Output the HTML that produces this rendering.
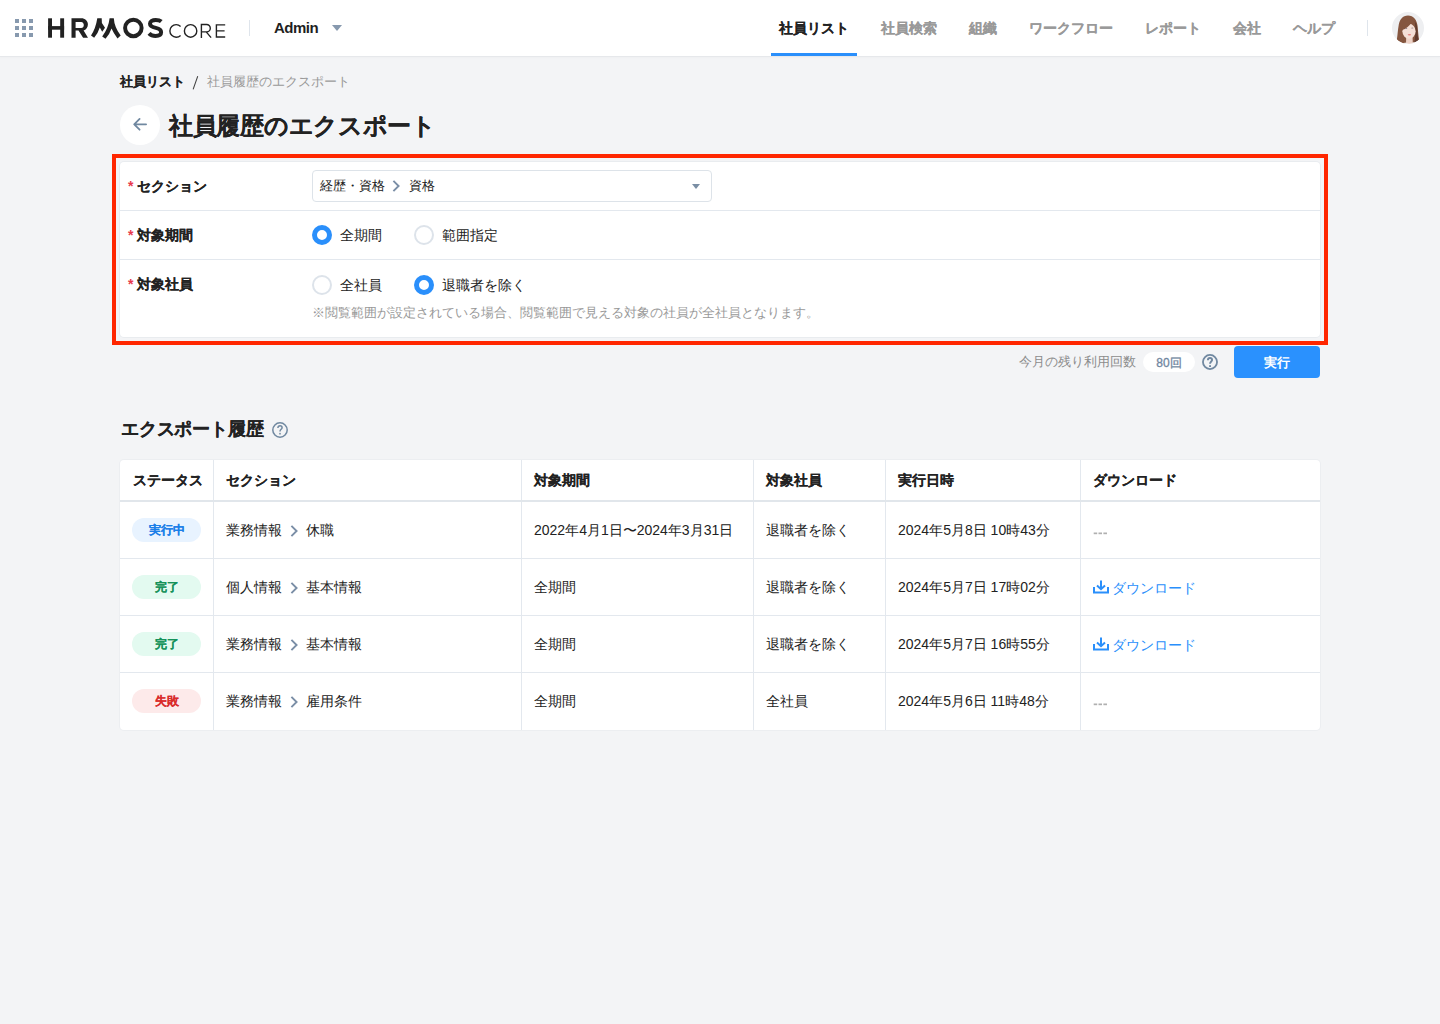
<!DOCTYPE html>
<html lang="ja">
<head>
<meta charset="utf-8">
<style>
*{box-sizing:border-box;margin:0;padding:0}
html,body{width:1440px;height:1024px;overflow:hidden}
body{background:#f3f4f6;font-family:"Liberation Sans",sans-serif;color:#222;position:relative}
.abs{position:absolute}
/* header */
.hdr{position:absolute;left:0;top:0;width:1440px;height:56px;background:#fff;box-shadow:0 1px 0 #e6e8eb,0 2px 2px rgba(0,0,0,0.02)}
.grid{position:absolute;left:15px;top:19px;width:18px;height:18px}
.grid i{position:absolute;width:4px;height:4px;background:#8799ae}
.vdiv{position:absolute;top:20px;width:1px;height:16px;background:#dfe5ec}
.admin{position:absolute;left:274px;top:18px;letter-spacing:-0.5px;font-size:15px;font-weight:bold;color:#1f1f1f;line-height:20px}
.tri{position:absolute;left:332px;top:25px;width:0;height:0;border-left:5px solid transparent;border-right:5px solid transparent;border-top:6px solid #8799ae}
.nav{position:absolute;left:771px;top:0;height:56px;display:flex}
.nav a{display:block;position:relative;padding:0 8px;margin-right:16px;height:56px;line-height:56px;font-size:14px;font-weight:bold;color:#999;text-decoration:none;white-space:nowrap}
.nav a.on{color:#222}
.nav a.on:after{content:"";position:absolute;left:0;right:0;bottom:0;height:3px;background:#2a8ffb}
.avatar{position:absolute;left:1392px;top:12px;width:32px;height:32px;border-radius:50%;background:#eeeff1;overflow:hidden}
/* breadcrumb & title */
.bc{position:absolute;left:120px;top:72px;font-size:13px;line-height:20px;white-space:nowrap}
.bc b{color:#222}
.bc .sl{color:#555;margin:0 9px 0 9px}
.bc .cur{color:#999}
.back{position:absolute;left:120px;top:105px;width:40px;height:40px;border-radius:50%;background:#fff}
.title{position:absolute;left:169px;top:109px;letter-spacing:-0.3px;font-size:24px;font-weight:bold;line-height:34px;color:#222;white-space:nowrap}
/* form */
.redbox{position:absolute;left:112px;top:154px;width:1216px;height:191px;border:4px solid #ff2600}
.card{position:absolute;left:120px;top:162px;width:1200px;height:175px;background:#fff;border-radius:4px;box-shadow:0 0 0 1px #e9ecef}
.row{position:absolute;left:0;width:1200px}
.hr{position:absolute;left:0;width:1200px;height:1px;background:#e3e8ee}
.lbl{position:absolute;left:17px;font-size:14px;font-weight:bold;color:#222;line-height:20px;white-space:nowrap}
.lbl s{position:absolute;left:-9px;top:0;text-decoration:none;color:#e8394d;font-weight:bold;-webkit-text-stroke:0}
.sel{position:absolute;left:192px;top:8px;width:400px;height:32px;border:1px solid #dde3e9;border-radius:4px;font-size:13px;line-height:30px;padding-left:7px;color:#222;white-space:nowrap}
.chev{display:inline-block;width:7px;height:7px;border-right:2px solid #7a8ea4;border-top:2px solid #7a8ea4;transform:rotate(45deg);vertical-align:1px}
.sel .dd{position:absolute;right:11px;top:13px;border-left:4.5px solid transparent;border-right:4.5px solid transparent;border-top:5px solid #7a8ea4}
.radio{position:absolute;width:20px;height:20px;border-radius:50%;border:2px solid #dde3ea;background:#fff}
.radio.on{border:5px solid #2a8ffb}
.rl{position:absolute;font-size:14px;color:#222;line-height:20px;white-space:nowrap}
.note{position:absolute;left:192px;font-size:13px;color:#999;line-height:18px;white-space:nowrap}
/* footer */
.rem{position:absolute;left:1019px;top:352px;font-size:13px;color:#8c8c8c;line-height:20px;white-space:nowrap}
.pill{position:absolute;left:1143px;top:352px;width:52px;height:20px;border-radius:10px;background:#fff;font-size:12px;color:#6f86a0;text-align:center;line-height:22px;font-weight:normal;-webkit-text-stroke:0.3px currentColor}
.help{position:absolute;width:16px;height:16px}
.btn{position:absolute;left:1234px;top:346px;width:86px;height:32px;border-radius:4px;background:#2a91fe;color:#fff;font-size:13px;font-weight:bold;text-align:center;line-height:34px}
/* history */
.h2{position:absolute;left:121px;top:416px;letter-spacing:-0.2px;font-size:18px;font-weight:bold;line-height:26px;color:#222;white-space:nowrap}
.tbl{position:absolute;left:120px;top:460px;width:1200px;height:270px;background:#fff;border-radius:4px;box-shadow:0 0 0 1px #eceef1;overflow:hidden}
.col{position:absolute;top:0;width:1px;height:270px;background:#e3e8ee}
.th{position:absolute;top:0;height:40px;line-height:40px;font-size:14px;font-weight:bold;color:#222;white-space:nowrap}
.hbd{position:absolute;left:0;top:40px;width:1200px;height:2px;background:#e1e6eb}
.rd{position:absolute;left:0;width:1200px;height:1px;background:#e3e8ee}
.td{position:absolute;font-size:14px;color:#222;line-height:20px;white-space:nowrap}
.badge{position:absolute;left:12px;width:69px;height:24px;border-radius:12px;font-size:12px;font-weight:bold;text-align:center;line-height:24px}
.b-run{background:#e8f3ff;color:#1b7fe8}
.b-ok{background:#e3faf0;color:#15925a}
.b-ng{background:#fdeaea;color:#d92b2b}
.dash{color:#aaa}
.dl{color:#2a8ffb}
.title,.h2,.th,.lbl,.nav a,.bc b,.badge{-webkit-text-stroke:0.1px currentColor}
</style>
</head>
<body>
<div class="hdr">
  <div class="grid">
    <i style="left:0;top:0"></i><i style="left:7px;top:0"></i><i style="left:14px;top:0"></i>
    <i style="left:0;top:7px"></i><i style="left:7px;top:7px"></i><i style="left:14px;top:7px"></i>
    <i style="left:0;top:14px"></i><i style="left:7px;top:14px"></i><i style="left:14px;top:14px"></i>
  </div>
  <svg class="abs" style="left:44px;top:12px" width="190" height="32" viewBox="44 12 190 32">
    <g fill="#222">
      <rect x="48.1" y="18.3" width="3.9" height="19.4"/>
      <rect x="60.2" y="18.3" width="3.9" height="19.4"/>
      <rect x="48.1" y="26.1" width="16" height="3.6"/>
      <path fill-rule="evenodd" d="M71.5 18.3 H81.3 C85 18.3 87.9 21 87.9 24.4 C87.9 27.3 86.1 29.6 83.6 30.4 L88 37.7 H83.1 L78.5 30.6 H75.6 V37.7 H71.5 Z M75.6 21.9 V28 H81.2 C82.8 28 83.8 26.6 83.8 24.95 C83.8 23.3 82.8 21.9 81.2 21.9 Z"/>
      <path d="M97.3 18.2 L101.7 18.2 L101.9 23 L105 27.7 L102.2 31.8 L99.8 27.4 Q98.3 32.5 94.15 37.8 L91 35.6 Q95.8 28 97.3 18.2 Z"/>
      <path d="M109.6 18.2 L113.8 18.2 Q114.3 27 120.7 35.6 L117.5 38.6 Q113.5 33 111.5 28.5 Q110 33.5 105.5 38.75 L102.2 36.4 Q108.5 28 109.6 18.2 Z"/>
    </g>
    <circle cx="133.35" cy="27.9" r="8.25" fill="none" stroke="#222" stroke-width="4"/>
    <path d="M161.3 21.6 C159.8 20.3 157.8 19.9 155.7 19.9 C152.5 19.9 150 21.3 150 23.8 C150 26.6 153 27.3 155.8 27.9 C158.8 28.5 161.1 29.6 161.1 32.3 C161.1 35 158.6 36 155.5 36 C152.8 36 150.6 35 149 33.3" fill="none" stroke="#222" stroke-width="4"/>
    <g fill="none" stroke="#222" stroke-width="1.4">
      <path d="M180.6 26.4 A6.3 6.3 0 1 0 180.6 35.4"/>
      <ellipse cx="190.6" cy="30.9" rx="6.2" ry="6.3"/>
      <path d="M201.4 37.9 V24.5 H206.6 A3.7 3.7 0 0 1 206.6 31.9 H201.4 M206.2 31.9 L211.1 37.6"/>
      <path d="M225.2 24.9 H216.4 V37 H225.2 M216.4 30.9 H224.6"/>
    </g>
  </svg>
  <div class="vdiv" style="left:249px"></div>
  <div class="admin">Admin</div>
  <div class="tri"></div>
  <div class="nav">
    <a class="on">社員リスト</a><a>社員検索</a><a>組織</a><a>ワークフロー</a><a>レポート</a><a>会社</a><a>ヘルプ</a>
  </div>
  <div class="vdiv" style="left:1367px"></div>
  <div class="avatar">
    <svg width="32" height="32" viewBox="0 0 32 32">
      <path d="M16 3.4 C10.5 3.4 7.8 7.5 6.8 12.5 C5.8 17.5 5.6 23.5 4.9 27.3 C6.5 29.8 9 31 11.8 31.3 L21.5 30.5 C24 30 25.8 29 27 27.3 C26.3 23 26 18 25.6 14 C25 8 21.5 3.4 16 3.4 Z" fill="#85563f"/>
      <path d="M22.5 9 C24.5 11 25 14 25.3 17 C25.6 22 25.8 26 26.8 28 C25.5 29.3 23.8 30 22.3 30.4 C23.5 25 23.8 18 23.2 13 Z" fill="#4e3128" opacity="0.7"/>
      <path d="M14 32 L14.2 25 L20.6 25 L20.8 32 Z" fill="#eed3c8"/>
      <path d="M11 32 L13 30.6 L17.3 32 L21.5 30.6 L23 32 Z" fill="#f7f5f4"/>
      <ellipse cx="17" cy="19.2" rx="6.6" ry="7.5" fill="#f4dfd6"/>
      <path d="M9.6 18.3 C10 11 13 7.8 17.5 7.8 C20.5 7.8 22.8 9.2 24 11.8 C22.5 10.6 21 10.2 19.8 10.2 C17.6 13.8 14.2 16.8 9.6 18.3 Z" fill="#85563f"/>
      <ellipse cx="14.2" cy="16.6" rx="1.1" ry="0.5" fill="#8f7f88"/>
      <ellipse cx="20.3" cy="16" rx="1.1" ry="0.5" fill="#9c8a8a"/>
      <ellipse cx="17.4" cy="22.8" rx="1.7" ry="0.8" fill="#e57f7c"/>
    </svg>
  </div>
</div>

<div class="bc"><b>社員リスト</b><span class="cur" style="position:absolute;left:87px;top:0">社員履歴のエクスポート</span></div>
<svg class="abs" style="left:190px;top:74px" width="12" height="18" viewBox="0 0 12 18"><path d="M7.6 2.6 L3.3 14.9" stroke="#444" stroke-width="1.1" stroke-linecap="round"/></svg>
<div class="back">
  <svg class="abs" style="left:12px;top:12px" width="16" height="16" viewBox="0 0 16 16">
    <path d="M14.1 7.3 H2.2 M7.6 1.9 L2.2 7.3 L7.6 12.7" fill="none" stroke="#7088a0" stroke-width="1.8" stroke-linecap="round" stroke-linejoin="round"/>
  </svg>
</div>
<div class="title">社員履歴のエクスポート</div>

<div class="redbox"></div>
<div class="card">
  <div class="lbl" style="top:14px"><s>*</s>セクション</div>
  <div class="sel">経歴・資格<span style="position:absolute;left:96px;top:0">資格</span><svg width="8" height="12" viewBox="0 0 8 12" style="position:absolute;left:79px;top:9px"><path d="M1.4 0.8 L6.6 6 L1.4 11.2" fill="none" stroke="#7a8ea6" stroke-width="1.9"/></svg><i class="dd"></i></div>
  <div class="hr" style="top:48px"></div>
  <div class="lbl" style="top:63px"><s>*</s>対象期間</div>
  <div class="radio on" style="left:192px;top:63px"></div>
  <div class="rl" style="left:220px;top:63px">全期間</div>
  <div class="radio" style="left:294px;top:63px"></div>
  <div class="rl" style="left:322px;top:63px">範囲指定</div>
  <div class="hr" style="top:97px"></div>
  <div class="lbl" style="top:112px"><s>*</s>対象社員</div>
  <div class="radio" style="left:192px;top:113px"></div>
  <div class="rl" style="left:220px;top:113px">全社員</div>
  <div class="radio on" style="left:294px;top:113px"></div>
  <div class="rl" style="left:322px;top:113px">退職者を除く</div>
  <div class="note" style="top:142px">※閲覧範囲が設定されている場合、閲覧範囲で見える対象の社員が全社員となります。</div>
</div>

<div class="rem">今月の残り利用回数</div>
<div class="pill">80回</div>
<svg class="help" style="left:1202px;top:354px" viewBox="0 0 16 16">
  <circle cx="8" cy="8" r="7.05" fill="none" stroke="#7088a0" stroke-width="1.8"/>
  <path d="M5.9 6.3 C5.9 4.8 6.8 4.05 8 4.05 C9.25 4.05 10.1 4.9 10.1 6 C10.1 7.4 8.05 7.7 8.05 9.7" fill="none" stroke="#7088a0" stroke-width="1.9"/>
  <rect x="7.1" y="11.2" width="1.9" height="1.8" fill="#7088a0"/>
</svg>
<div class="btn">実行</div>

<div class="h2">エクスポート履歴</div>
<svg class="help" style="left:272px;top:422px" viewBox="0 0 16 16">
  <circle cx="8" cy="8" r="7.2" fill="none" stroke="#7088a0" stroke-width="1.5"/>
  <path d="M5.9 5.9 C5.9 4.6 6.8 3.8 8 3.8 C9.2 3.8 10.1 4.6 10.1 5.7 C10.1 7.2 8 7.5 8 9.4" fill="none" stroke="#7088a0" stroke-width="1.5"/>
  <rect x="7.25" y="10.9" width="1.5" height="1.6" fill="#7088a0"/>
</svg>

<div class="tbl" id="tbl">
<div class="col" style="left:93px"></div>
<div class="col" style="left:401px"></div>
<div class="col" style="left:633px"></div>
<div class="col" style="left:765px"></div>
<div class="col" style="left:960px"></div>
<div class="th" style="left:13px">ステータス</div>
<div class="th" style="left:106px">セクション</div>
<div class="th" style="left:414px">対象期間</div>
<div class="th" style="left:646px">対象社員</div>
<div class="th" style="left:778px">実行日時</div>
<div class="th" style="left:973px">ダウンロード</div>
<div class="hbd"></div>
<div class="badge b-run" style="top:58px">実行中</div>
<div class="td" style="left:106px;top:60px">業務情報</div><svg width="8" height="12" viewBox="0 0 8 12" style="position:absolute;left:170px;top:65px"><path d="M1.4 0.8 L6.6 6 L1.4 11.2" fill="none" stroke="#7a8ea6" stroke-width="1.9"/></svg><div class="td" style="left:186px;top:60px">休職</div>
<div class="td" style="left:414px;top:60px">2022年4月1日〜2024年3月31日</div>
<div class="td" style="left:646px;top:60px">退職者を除く</div>
<div class="td" style="left:778px;top:60px">2024年5月8日 10時43分</div>
<svg class="abs" style="left:973px;top:72px" width="15" height="3" viewBox="0 0 15 3"><g fill="#b0b0b0"><rect x="0.7" y="0.5" width="3.5" height="1.7"/><rect x="5.5" y="0.5" width="3.5" height="1.7"/><rect x="10.4" y="0.5" width="3.6" height="1.7"/></g></svg>
<div class="rd" style="top:98px"></div>
<div class="badge b-ok" style="top:115px">完了</div>
<div class="td" style="left:106px;top:117px">個人情報</div><svg width="8" height="12" viewBox="0 0 8 12" style="position:absolute;left:170px;top:122px"><path d="M1.4 0.8 L6.6 6 L1.4 11.2" fill="none" stroke="#7a8ea6" stroke-width="1.9"/></svg><div class="td" style="left:186px;top:117px">基本情報</div>
<div class="td" style="left:414px;top:117px">全期間</div>
<div class="td" style="left:646px;top:117px">退職者を除く</div>
<div class="td" style="left:778px;top:117px">2024年5月7日 17時02分</div>
<div class="td dl" style="left:973px;top:118px"><svg style="display:inline-block;vertical-align:-1px;margin-right:3px" width="16" height="14" viewBox="0 0 16 14"><path d="M8 0.5 V9 M4 5.5 L8 9.2 L12 5.5" fill="none" stroke="#2a8ffb" stroke-width="2"/><path d="M1 7 V12.5 H15 V7" fill="none" stroke="#2a8ffb" stroke-width="2"/></svg>ダウンロード</div>
<div class="rd" style="top:155px"></div>
<div class="badge b-ok" style="top:172px">完了</div>
<div class="td" style="left:106px;top:174px">業務情報</div><svg width="8" height="12" viewBox="0 0 8 12" style="position:absolute;left:170px;top:179px"><path d="M1.4 0.8 L6.6 6 L1.4 11.2" fill="none" stroke="#7a8ea6" stroke-width="1.9"/></svg><div class="td" style="left:186px;top:174px">基本情報</div>
<div class="td" style="left:414px;top:174px">全期間</div>
<div class="td" style="left:646px;top:174px">退職者を除く</div>
<div class="td" style="left:778px;top:174px">2024年5月7日 16時55分</div>
<div class="td dl" style="left:973px;top:175px"><svg style="display:inline-block;vertical-align:-1px;margin-right:3px" width="16" height="14" viewBox="0 0 16 14"><path d="M8 0.5 V9 M4 5.5 L8 9.2 L12 5.5" fill="none" stroke="#2a8ffb" stroke-width="2"/><path d="M1 7 V12.5 H15 V7" fill="none" stroke="#2a8ffb" stroke-width="2"/></svg>ダウンロード</div>
<div class="rd" style="top:212px"></div>
<div class="badge b-ng" style="top:229px">失敗</div>
<div class="td" style="left:106px;top:231px">業務情報</div><svg width="8" height="12" viewBox="0 0 8 12" style="position:absolute;left:170px;top:236px"><path d="M1.4 0.8 L6.6 6 L1.4 11.2" fill="none" stroke="#7a8ea6" stroke-width="1.9"/></svg><div class="td" style="left:186px;top:231px">雇用条件</div>
<div class="td" style="left:414px;top:231px">全期間</div>
<div class="td" style="left:646px;top:231px">全社員</div>
<div class="td" style="left:778px;top:231px">2024年5月6日 11時48分</div>
<svg class="abs" style="left:973px;top:243px" width="15" height="3" viewBox="0 0 15 3"><g fill="#b0b0b0"><rect x="0.7" y="0.5" width="3.5" height="1.7"/><rect x="5.5" y="0.5" width="3.5" height="1.7"/><rect x="10.4" y="0.5" width="3.6" height="1.7"/></g></svg>
</div>
</body>
</html>
